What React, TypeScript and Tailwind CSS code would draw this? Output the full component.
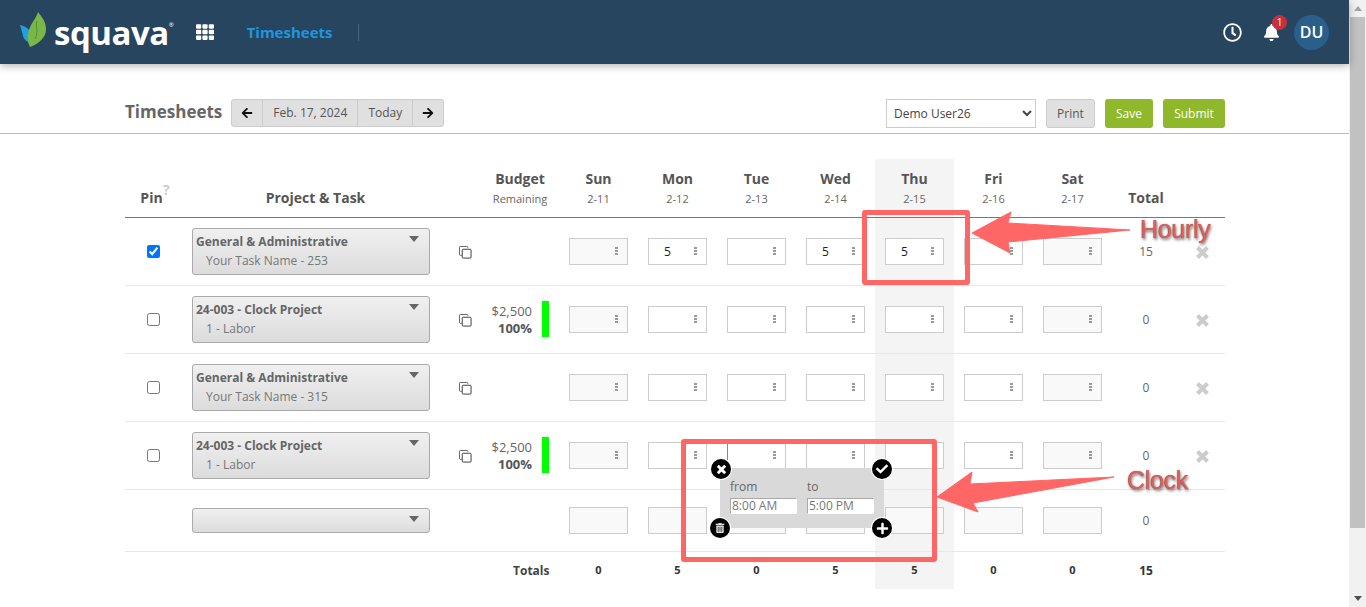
import { FaArrowLeft, FaArrowRight, FaBell, FaCheck, FaPlus, FaRegClock, FaTh, FaTrashAlt } from 'react-icons/fa';

const COLS = 'grid grid-cols-[57px_263px_40px_74px_repeat(7,79px)_68px_45px]';

const DAYS = [
  { name: 'Sun', date: '2-11' },
  { name: 'Mon', date: '2-12' },
  { name: 'Tue', date: '2-13' },
  { name: 'Wed', date: '2-14' },
  { name: 'Thu', date: '2-15' },
  { name: 'Fri', date: '2-16' },
  { name: 'Sat', date: '2-17' },
];

const ROWS = [
  { pinned: true, project: 'General & Administrative', task: 'Your Task Name - 253', budget: false, values: ['', '5', '', '5', '5', '', ''], total: '15' },
  { pinned: false, project: '24-003 - Clock Project', task: '1 - Labor', budget: true, values: ['', '', '', '', '', '', ''], total: '0' },
  { pinned: false, project: 'General & Administrative', task: 'Your Task Name - 315', budget: false, values: ['', '', '', '', '', '', ''], total: '0' },
  { pinned: false, project: '24-003 - Clock Project', task: '1 - Labor', budget: true, values: ['', '', '', '', '', '', ''], total: '0', hideKebabOn: 4 },
];

const TOTALS = ['0', '5', '0', '5', '5', '0', '0'];

function Kebab() {
  return (
    <span className="absolute right-[10px] top-[9px] flex flex-col gap-[1px]">
      <span className="h-[2px] w-[3px] bg-[#999]" />
      <span className="h-[2px] w-[3px] bg-[#999]" />
      <span className="h-[2px] w-[3px] bg-[#999]" />
    </span>
  );
}

function DayInput({ value, weekend, kebab = true, dark }: { value?: string; weekend?: boolean; kebab?: boolean; dark?: boolean }) {
  return (
    <div className="relative h-[27px] w-[59px]">
      <input
        readOnly
        value={value ?? ''}
        className={`h-full w-full border pl-[15px] text-[12px] text-[#222] outline-none ${
          weekend ? 'bg-[#f9f9f9]' : 'bg-white'
        } ${dark ? 'border-[#ccc] border-t-[#888] border-l-[#888]' : 'border-[#ccc]'}`}
      />
      {kebab && <Kebab />}
    </div>
  );
}

function TaskSelect({ project, task }: { project?: string; task?: string }) {
  return (
    <div
      className={`relative w-[238px] rounded-[3px] border border-[#aaa] bg-gradient-to-b from-[#f0f0f0] to-[#dcdcdc] pl-[3px] text-[12px] text-[#666] ${
        project ? 'h-[47px]' : 'h-[25px]'
      }`}
    >
      {project && <div className="mt-[4px] font-bold leading-[18px]">{project}</div>}
      {task && <div className="ml-[10px] mt-[1px] leading-[18px] text-[#777]">{task}</div>}
      <span className="absolute right-[10px] top-[7px] h-0 w-0 border-x-[5px] border-t-[6px] border-x-transparent border-t-[#666]" />
    </div>
  );
}

function CopyIcon() {
  return (
    <svg width="13" height="13" viewBox="0 0 14 14" fill="none" className="mt-[1px]">
      <path d="M9.5 2V1.500a1 1 0 0 0-1-1H1.500a1 1 0 0 0-1 1V9a1 1 0 0 0 1 1H3" stroke="#555" />
      <rect x="3.500" y="3.500" width="9.500" height="9.500" rx="1" stroke="#333" />
    </svg>
  );
}

function ThickX({ size, color, width }: { size: number; color: string; width: number }) {
  return (
    <svg width={size} height={size} viewBox="0 0 12 12">
      <path d="M2 2l8 8M10 2l-8 8" stroke={color} strokeWidth={width} fill="none" />
    </svg>
  );
}

function RoundAction({ className, children }: { className: string; children: React.ReactNode }) {
  return (
    <span className={`absolute flex h-[20px] w-[20px] items-center justify-center rounded-full bg-black text-white ring-1 ring-white ${className}`}>
      {children}
    </span>
  );
}

function Logo() {
  return (
    <div className="flex items-center">
      <svg width="27" height="38" viewBox="0 0 27 38" className="mb-[5px]">
        <path d="M0 14C5 15 10 18 12 24C13 27 13 30 13 32C8 32 4 29 3 25C2 21 1 17 0 14z" fill="#1da1e2" />
        <path d="M18 1C22 6 26 11 26 18C26 26 20 32 10 36C7 30 7 24 9 19C11 12 16 8 18 1z" fill="#7ab648" />
        <path d="M17 10C15 16 19 21 15 28" stroke="#558f2e" strokeWidth="1" fill="none" />
      </svg>
      <span className="ml-[7px] text-[33px] font-bold leading-none tracking-[-0.5px] text-white">squava</span>
      <span className="mb-[14px] text-[6px] text-white">®</span>
    </div>
  );
}

export default function App() {
  return (
    <div className="flex h-[607px] w-[1366px] overflow-hidden bg-white font-['Open_Sans',sans-serif] text-[#555]">
      <main className="relative w-[1349px]">
        <header className="relative z-10 flex h-[64px] items-center bg-[#27455f] pl-[20px] pr-[20px] shadow-[0_2px_8px_rgba(0,0,0,0.3)]">
          <Logo />
          <FaTh className="ml-[22px] text-[18px] text-white" />
          <span className="ml-[33px] text-[15px] font-bold text-[#1c97e0]">Timesheets</span>
          <span className="ml-[25px] h-[17px] w-px bg-[#46647e]" />
          <div className="ml-auto flex items-center">
            <FaRegClock className="text-[19px] text-white" />
            <div className="relative ml-[21px]">
              <FaBell className="text-[17px] text-white" />
              <span className="absolute -right-[7px] -top-[9px] flex h-[15px] w-[15px] items-center justify-center rounded-full bg-[#c5303c] text-[10px] leading-none text-white">1</span>
            </div>
            <span className="ml-[14px] flex h-[35px] w-[35px] items-center justify-center rounded-full bg-[#2a5f8c] text-[16px] font-semibold text-white">DU</span>
          </div>
        </header>

        <div className="flex h-[70px] items-end border-b border-[#bbb] pb-[5px] pl-[125px] pr-[124px]">
          <h1 className="mb-[2px] text-[17px] font-bold leading-[28px] text-[#666]">Timesheets</h1>
          <div className="mb-[1px] ml-[9px] flex h-[28px] overflow-hidden rounded-[3px] border border-[#ccc] bg-[#e0e0e0] text-[12px] text-[#555]">
            <span className="flex w-[31px] items-center justify-center border-r border-[#ccc] text-[12px] text-[#111]"><FaArrowLeft /></span>
            <span className="flex w-[95px] items-center justify-center border-r border-[#ccc]">Feb. 17, 2024</span>
            <span className="flex w-[55px] items-center justify-center border-r border-[#ccc]">Today</span>
            <span className="flex w-[30px] items-center justify-center text-[12px] text-[#111]"><FaArrowRight /></span>
          </div>
          <div className="ml-auto flex items-end text-[12px]">
            <select className="h-[29px] w-[150px] border border-[#ccc] bg-white pl-[3px] text-[12px] text-[#444] outline-none">
              <option>Demo User26</option>
            </select>
            <button className="ml-[10px] h-[29px] w-[49px] rounded-[3px] border border-[#ccc] bg-[#e0e0e0] text-[#555]">Print</button>
            <button className="ml-[10px] h-[29px] w-[48px] rounded-[3px] bg-[#8fb82b] text-white">Save</button>
            <button className="ml-[10px] h-[29px] w-[62px] rounded-[3px] bg-[#8fb82b] text-white">Submit</button>
          </div>
        </div>

        <div className="ml-[125px] mt-[25px] w-[1100px]">
          <div className={`${COLS} h-[59px] border-b border-[#777] text-[14px] font-bold text-[#555]`}>
            <div className="relative flex items-end justify-center pb-[9px] pr-[4px]">
              Pin
              <span className="absolute left-[38px] top-[23px] text-[14px] leading-[16px] text-[#ccc]">?</span>
            </div>
            <div className="flex items-end justify-center pb-[9px] pl-[4px]">Project &amp; Task</div>
            <div />
            <div className="flex flex-col items-center pr-[4px] pt-[10px]">
              <span className="leading-[20px]">Budget</span>
              <span className="text-[11px] font-normal leading-[20px] text-[#666]">Remaining</span>
            </div>
            {DAYS.map((d) => (
              <div key={d.name} className={`flex flex-col items-center pt-[10px] ${d.name === 'Thu' ? 'bg-[#f4f4f4]' : ''}`}>
                <span className="leading-[20px]">{d.name}</span>
                <span className="text-[11px] font-normal leading-[20px] text-[#666]">{d.date}</span>
              </div>
            ))}
            <div className="flex items-end justify-center pb-[9px]">Total</div>
            <div />
          </div>

          {ROWS.map((row, i) => (
            <div key={i} className={`${COLS} h-[68px] border-b border-[#e8e8e8]`}>
              <div className="flex items-center justify-center">
                <input type="checkbox" readOnly checked={row.pinned} className="h-[13px] w-[13px]" />
              </div>
              <div className="flex items-center pl-[10px]">
                <TaskSelect project={row.project} task={row.task} />
              </div>
              <div className="flex items-center justify-center"><CopyIcon /></div>
              <div className="flex items-center justify-end pr-[10px]">
                {row.budget && (
                  <>
                    <div className="mr-[10px] text-right">
                      <div className="text-[13px] leading-[18px] text-[#666]">$2,500</div>
                      <div className="text-[13px] font-bold leading-[17px]">100%</div>
                    </div>
                    <span className="mb-[2px] h-[36px] w-[7px] bg-[#00ff00]" />
                  </>
                )}
              </div>
              {row.values.map((v, d) => (
                <div key={d} className={`flex items-center justify-center ${d === 4 ? 'bg-[#f4f4f4]' : ''}`}>
                  <DayInput
                    value={v}
                    weekend={d === 0 || d === 6}
                    kebab={row.hideKebabOn !== d}
                    dark={i === 3 && d === 2}
                  />
                </div>
              ))}
              <div className="flex items-center justify-center text-[12px] text-[#666]">{row.total}</div>
              <div className="flex items-center justify-center pt-[2px]"><ThickX size={15} color="#ccc" width={3.2} /></div>
            </div>
          ))}

          <div className={`${COLS} h-[62px] border-b border-[#e8e8e8]`}>
            <div />
            <div className="flex items-center pl-[10px]"><TaskSelect /></div>
            <div />
            <div />
            {DAYS.map((d) => (
              <div key={d.name} className={`flex items-center justify-center ${d.name === 'Thu' ? 'bg-[#f4f4f4]' : ''}`}>
                <DayInput weekend kebab={false} />
              </div>
            ))}
            <div className="flex items-center justify-center text-[12px] text-[#666]">0</div>
            <div />
          </div>

          <div className={`${COLS} h-[37px] text-[11px] font-bold text-[#333]`}>
            <div />
            <div />
            <div />
            <div className="flex items-center justify-start text-[12px] text-[#444]">
              <span className="ml-[28px]">Totals</span>
            </div>
            {TOTALS.map((t, d) => (
              <div key={d} className={`flex items-center justify-center ${d === 4 ? 'bg-[#f4f4f4]' : ''}`}>{t}</div>
            ))}
            <div className="flex items-center justify-center text-[12px]">15</div>
            <div />
          </div>
        </div>

        {/* clock popup over the grid */}
        <div className="absolute left-[720px] top-[468px] h-[60px] w-[164px] bg-[#d9d9d9] pl-[10px] text-[12px] text-[#666]">
          <div className="mt-[10px] flex gap-[10px]">
            <div className="w-[67px]">
              <div className="leading-[17px]">from</div>
              <input readOnly value="8:00 AM" className="mt-[3px] h-[16px] w-full border border-[#aaa] border-b-white border-r-white bg-white pl-[1px] text-[12px] text-[#777] outline-none" />
            </div>
            <div className="w-[67px]">
              <div className="leading-[17px]">to</div>
              <input readOnly value="5:00 PM" className="mt-[3px] h-[16px] w-full border border-[#aaa] border-b-white border-r-white bg-white pl-[1px] text-[12px] text-[#777] outline-none" />
            </div>
          </div>
        </div>
        <RoundAction className="left-[711px] top-[459px]"><ThickX size={11} color="#fff" width={3.2} /></RoundAction>
        <RoundAction className="left-[872px] top-[459px]"><FaCheck className="text-[12px]" /></RoundAction>
        <RoundAction className="left-[710px] top-[518px]"><FaTrashAlt className="text-[10px] text-[#ddd]" /></RoundAction>
        <RoundAction className="left-[872px] top-[518px]"><FaPlus className="text-[13px]" /></RoundAction>

        {/* annotations drawn on top of the screenshot */}
        <div className="absolute left-[862px] top-[210px] h-[75px] w-[108px] rounded-[3px] border-[5px] border-[#ff6666]" />
        <div className="absolute left-[681px] top-[439px] h-[123px] w-[256px] rounded-[3px] border-[5px] border-[#ff6666]" />
        <svg className="absolute left-0 top-0" width="1349" height="607" fill="#ff6666" strokeLinejoin="round">
          <polygon points="972,233 1011,212 1008,223 1130,230 1008,242 1010,253" stroke="#ff6666" />
          <polygon points="937,497 972,472 970,484 1114,477 973,503 978,512" stroke="#ff6666" />
        </svg>
        <span className="absolute left-[1140px] top-[214px] font-['Liberation_Sans',sans-serif] text-[25px] leading-[30px] tracking-[-0.3px] text-[#e25c5c] [text-shadow:0_0_1px_rgba(0,0,0,0.6),1px_2px_3px_rgba(0,0,0,0.55)]">Hourly</span>
        <span className="absolute left-[1127px] top-[465px] font-['Liberation_Sans',sans-serif] text-[25px] leading-[30px] tracking-[-0.3px] text-[#e25c5c] [text-shadow:0_0_1px_rgba(0,0,0,0.6),1px_2px_3px_rgba(0,0,0,0.55)]">Clock</span>
      </main>

      {/* window scrollbar */}
      <aside className="flex w-[17px] flex-col items-center bg-[#f1f1f1]">
        <span className="mt-[6px] h-0 w-0 border-x-[4px] border-b-[5px] border-x-transparent border-b-[#a3a3a3]" />
        <span className="mt-[6px] h-[511px] w-[15px] bg-[#c1c1c1]" />
        <span className="mb-[6px] mt-auto h-0 w-0 border-x-[4px] border-t-[5px] border-x-transparent border-t-[#505050]" />
      </aside>
    </div>
  );
}
